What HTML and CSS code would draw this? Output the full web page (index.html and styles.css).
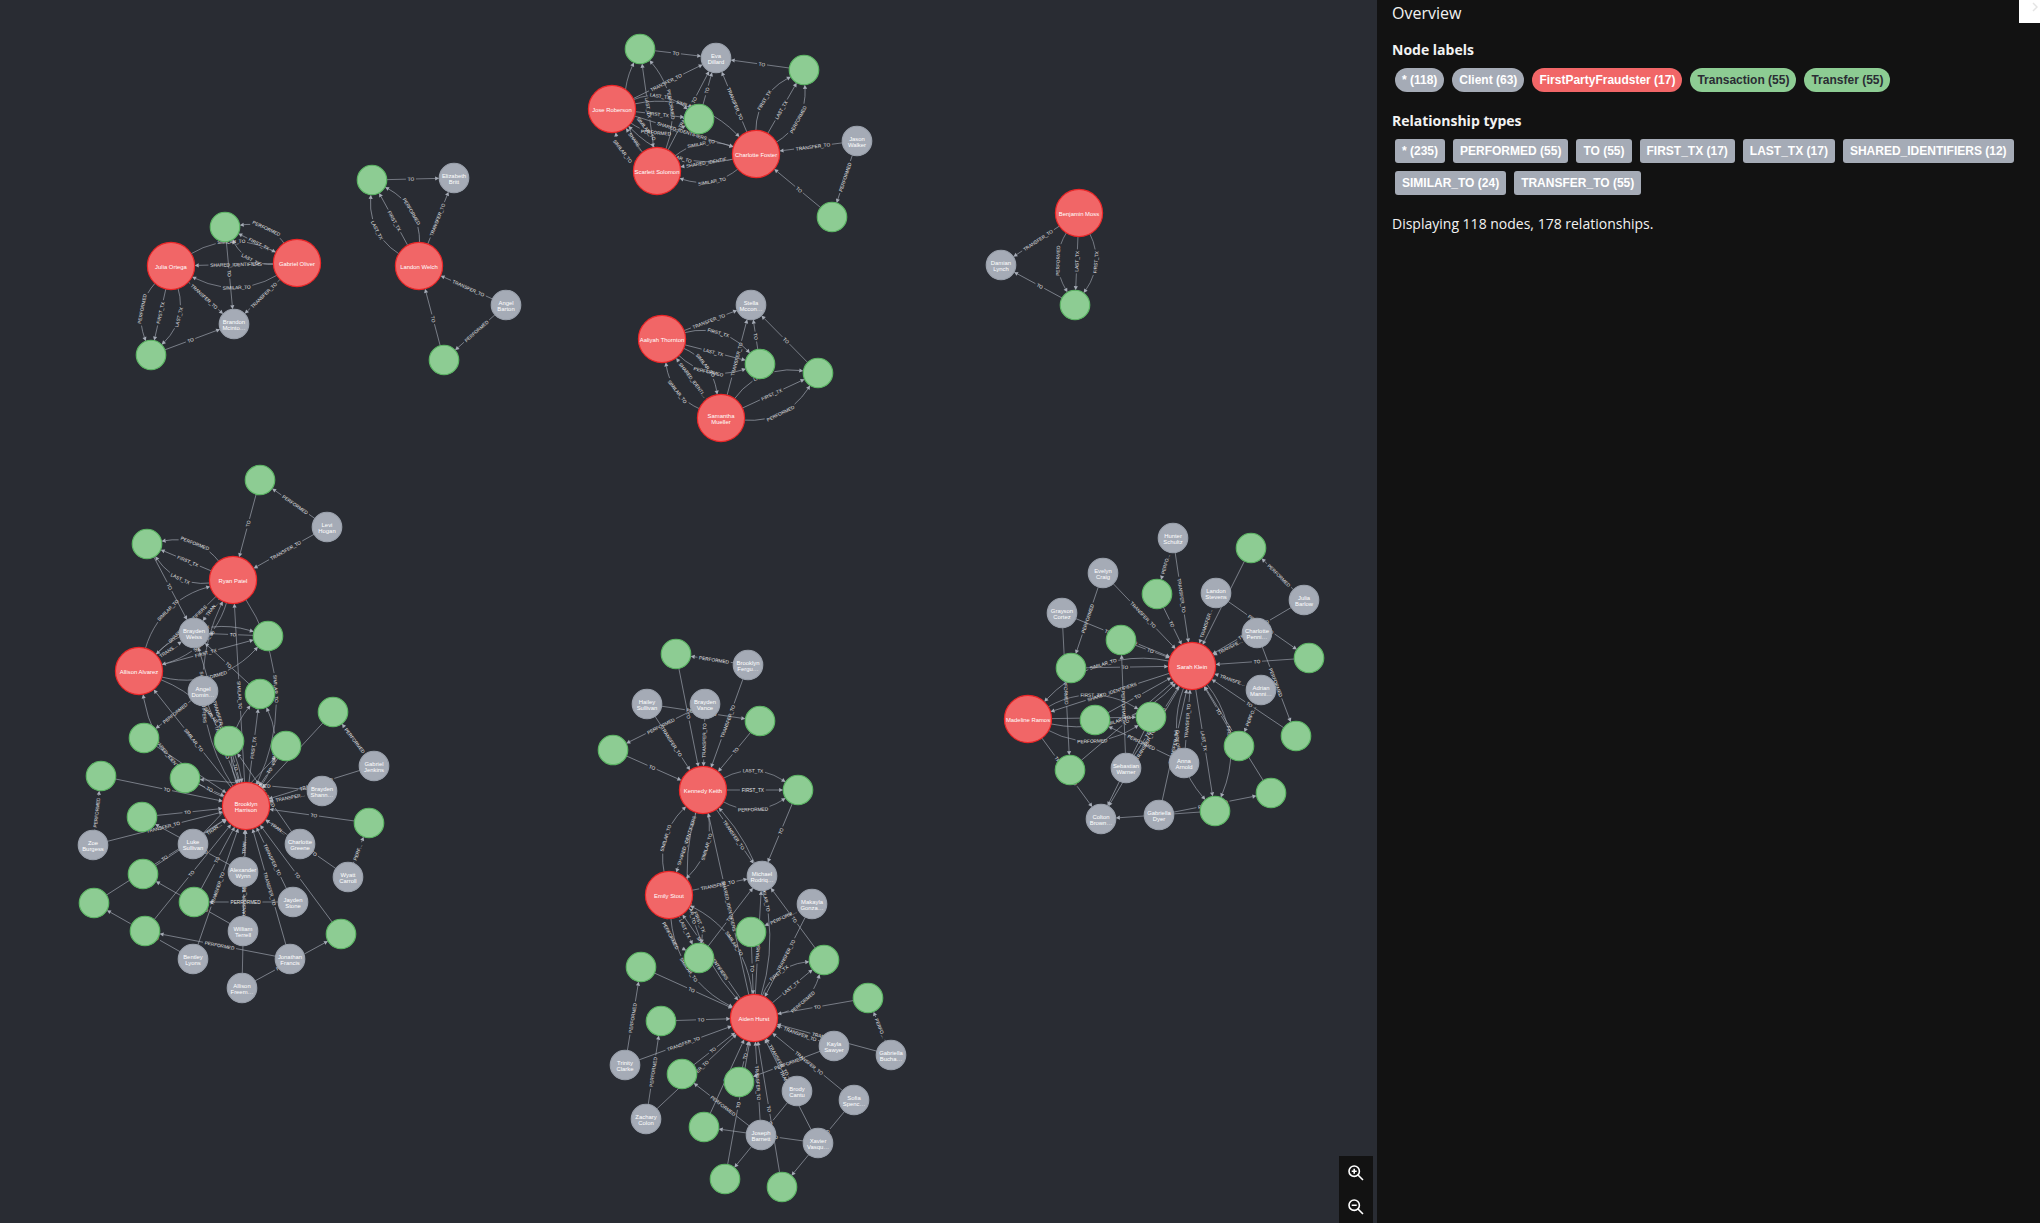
FILE: index.html
```html
<!DOCTYPE html>
<html lang="en">
<head>
<meta charset="utf-8">
<title>Graph overview</title>
<link rel="stylesheet" href="styles.css">
</head>
<body>
<div class="viewer">
  <main class="canvas">
    <svg class="graph" role="img" aria-label="Fraud graph">
      <g id="world">
        <g id="relationships"></g>
        <g id="nodes"></g>
      </g>
    </svg>
    <div class="zoom">
      <button class="zoom-button" type="button" aria-label="Zoom in">
        <svg viewBox="0 0 16 16" width="16" height="16"><circle cx="6.2" cy="6.2" r="5.2"/><path d="M10 10l5 5M6.2 3.7v5M3.7 6.2h5"/></svg>
      </button>
      <button class="zoom-button" type="button" aria-label="Zoom out">
        <svg viewBox="0 0 16 16" width="16" height="16"><circle cx="6.2" cy="6.2" r="5.2"/><path d="M10 10l5 5M3.7 6.2h5"/></svg>
      </button>
    </div>
  </main>
  <aside class="panel">
    <button class="collapse" type="button" aria-label="Collapse panel">
      <svg viewBox="0 0 6 10" width="6" height="10"><path d="M1 1l4 4-4 4"/></svg>
    </button>
    <h1 class="title">Overview</h1>
    <h2 class="heading">Node labels</h2>
    <ul class="chips">
      <li><button type="button" class="chip label">* (118)</button></li>
      <li><button type="button" class="chip label">Client (63)</button></li>
      <li><button type="button" class="chip label fraudster">FirstPartyFraudster (17)</button></li>
      <li><button type="button" class="chip label transaction">Transaction (55)</button></li>
      <li><button type="button" class="chip label transaction">Transfer (55)</button></li>
    </ul>
    <h2 class="heading">Relationship types</h2>
    <ul class="chips">
      <li><button type="button" class="chip">* (235)</button></li>
      <li><button type="button" class="chip">PERFORMED (55)</button></li>
      <li><button type="button" class="chip">TO (55)</button></li>
      <li><button type="button" class="chip">FIRST_TX (17)</button></li>
      <li><button type="button" class="chip">LAST_TX (17)</button></li>
      <li><button type="button" class="chip">SHARED_IDENTIFIERS (12)</button></li>
      <li><button type="button" class="chip">SIMILAR_TO (24)</button></li>
      <li><button type="button" class="chip">TRANSFER_TO (55)</button></li>
    </ul>
    <p class="summary">Displaying 118 nodes, 178 relationships.</p>
  </aside>
</div>
<script src="graph.js"></script>
</body>
</html>
```
FILE: styles.css
```css
* { box-sizing: border-box; }

body {
  margin: 0;
  background: #292c33;
  color: #f2f2f2;
  font-family: "Open Sans", "Noto Sans", sans-serif;
  font-size: 14px;
  line-height: 20px;
}

.viewer {
  display: flex;
  height: 100vh;
}

.canvas {
  position: relative;
  flex: 1;
  min-width: 0;
  overflow: hidden;
}

.graph {
  display: block;
  width: 100%;
  height: 100%;
  font-family: "Liberation Sans", Arial, sans-serif;
  text-anchor: middle;
}

.shaft { fill: none; stroke: #a5abb6; stroke-width: 1px; }
.head { fill: #a5abb6; }
.type { fill: #e6e6e8; font-size: 8px; }
.name { fill: #fff; font-size: 10px; }
.node { stroke-width: 2px; }
.node.c { fill: #a5abb6; stroke: #9aa1ac; }
.node.f { fill: #f16667; stroke: #eb2728; }
.node.t { fill: #8dcc93; stroke: #5db665; }

.zoom {
  position: absolute;
  right: 4px;
  bottom: -1px;
  display: flex;
  flex-direction: column;
  background: #121212;
}

.zoom-button {
  display: flex;
  align-items: center;
  justify-content: center;
  width: 34px;
  height: 34px;
  padding: 0;
  border: 0;
  background: none;
}

.zoom-button svg {
  fill: none;
  stroke: #fff;
  stroke-width: 1.6;
}

.panel {
  position: relative;
  flex: 0 0 32.5%;
  padding: 1px 16px 0 15px;
  background: #121212;
}

.collapse {
  position: absolute;
  top: 0;
  right: 0;
  display: flex;
  justify-content: flex-end;
  width: 21px;
  height: 23px;
  padding: 2px 2px 0 0;
  border: 0;
  background: #fff;
}

.collapse svg {
  fill: none;
  stroke: #e4e4e4;
  stroke-width: 1.5;
}

.title {
  margin: 0 0 15px;
  font-size: 16px;
  font-weight: 400;
  line-height: 24px;
}

.heading {
  margin: 0 0 8px;
  font-size: 14px;
  font-weight: 700;
}

.chips {
  display: flex;
  flex-wrap: wrap;
  gap: 8px;
  margin: 0 0 19px;
  padding: 0 0 0 3px;
  list-style: none;
}

.chips li { display: flex; }

.chip {
  height: 24px;
  padding: 0 7px;
  border: 0;
  border-radius: 3px;
  background: #a5abb6;
  color: #fff;
  font: bold 12px/24px "Liberation Sans", Arial, sans-serif;
  white-space: nowrap;
}

.chip.label { border-radius: 12px; }
.chip.fraudster { background: #f16667; }
.chip.transaction { background: #8dcc93; color: #2a2c34; }

.summary { margin: 0; }
```
FILE: graph.js
```js
const ZOOM = 0.59;
const RADIUS = { c: 25, t: 25, f: 40 };
const HEAD = 7;
const PADDING = 3;
const SVG = 'http://www.w3.org/2000/svg';

// id, kind (c client, f fraudster, t transaction), x, y, caption lines
const nodeRows = `
t1 t 225 227
julia f 171 266 Julia Ortega
gabriel f 297 263 Gabriel Oliver
t2 t 151 355
brandon c 234 324 Brandon|Mcinto…
t3 t 372 180
elizabeth c 454 178 Elizabeth|Britt
landon f 419 266 Landon Welch
angelb c 506 305 Angel|Barton
t4 t 444 360
t5 t 640 49
eva c 716 58 Eva|Dillard
t6 t 804 70
jose f 612 109 Jose Roberson
t7 t 699 119
scarlett f 657 171 Scarlett Solomon
charf f 756 154 Charlotte Foster
jason c 857 141 Jason|Walker
t8 t 832 217
stella c 751 305 Stella|Mccon…
aaliyah f 662 339 Aaliyah Thornton
t9 t 760 364
t10 t 818 373
samantha f 721 418 Samantha|Mueller
benjamin f 1079 213 Benjamin Moss
damian c 1001 265 Damian|Lynch
t11 t 1075 305
t12 t 260 480
levi c 327 527 Levi|Hogan
t13 t 147 544
ryan f 233 580 Ryan Patel
weiss c 194 633 Brayden|Weiss
t14 t 268 636
alvarez f 139 671 Allison Alvarez
angeld c 203 691 Angel|Domin…
t15 t 260 694
t16 t 333 712
t17 t 144 738
t18 t 229 741
t19 t 286 746
jenkins c 374 766 Gabriel|Jenkins
t20 t 185 778
t21 t 101 776
shann c 322 791 Brayden|Shann…
harrison f 246 806 Brooklyn|Harrison
t22 t 142 817
t23 t 369 823
zoe c 93 845 Zoe|Burgess
luke c 193 844 Luke|Sullivan
greene c 300 844 Charlotte|Greene
t24 t 143 874
alex c 243 872 Alexander|Wynn
wyatt c 348 877 Wyatt|Carroll
t25 t 194 902
jayden c 293 902 Jayden|Stone
t26 t 94 903
william c 243 931 William|Terrell
t27 t 145 931
t28 t 341 934
bentley c 193 959 Bentley|Lyons
jonathan c 290 959 Jonathan|Francis
freem c 242 988 Allison|Freem…
t29 t 676 654
fergu c 748 665 Brooklyn|Fergu…
hailey c 647 704 Hailey|Sullivan
vance c 705 704 Brayden|Vance
t30 t 760 721
t31 t 613 750
kennedy f 703 790 Kennedy Keith
t32 t 798 790
emily f 669 895 Emily Stout
michael c 762 876 Michael|Rodriq…
makayla c 812 904 Makayla|Gonza…
t33 t 751 932
t34 t 699 958
t35 t 641 967
t36 t 824 960
t37 t 868 998
t38 t 661 1021
aiden f 754 1018 Aiden Hurst
kayla c 834 1046 Kayla|Sawyer
bucha c 891 1055 Gabriella|Bucha…
trinity c 625 1065 Trinity|Clarke
t39 t 682 1074
t40 t 739 1082
brody c 797 1091 Brody|Cantu
sofia c 854 1100 Sofia|Spenc…
zachary c 646 1119 Zachary|Colon
t41 t 704 1127
joseph c 761 1135 Joseph|Barnett
xavier c 818 1143 Xavier|Vasqu…
t42 t 725 1179
t43 t 782 1187
hunter c 1173 538 Hunter|Schultz
t44 t 1251 548
evelyn c 1103 573 Evelyn|Craig
t45 t 1157 594
stevens c 1216 593 Landon|Stevens
barlow c 1304 600 Julia|Barlow
grayson c 1062 613 Grayson|Cortez
penni c 1257 633 Charlotte|Penni…
t46 t 1121 640
t47 t 1309 658
t48 t 1071 668
sarah f 1192 666 Sarah Klein
adrian c 1261 690 Adrian|Manni…
madeline f 1028 719 Madeline Ramos
t49 t 1095 720
t50 t 1151 717
t51 t 1296 736
t52 t 1239 746
t53 t 1070 770
anna c 1184 763 Anna|Arnold
sebastian c 1126 768 Sebastian|Warner
t54 t 1271 793
t55 t 1215 811
dyer c 1159 815 Gabriella|Dyer
colton c 1101 819 Colton|Brown…
`;

// Straight relationships, grouped by type, as source>target
const straight = {
  TO: `t1>brandon t2>brandon t3>elizabeth t4>landon t5>eva t6>eva t7>eva t8>charf
    t9>stella t10>stella t11>damian t12>ryan t13>weiss t14>weiss t15>weiss t16>harrison
    t17>harrison t18>harrison t19>harrison t20>harrison t21>harrison t22>harrison
    t23>harrison t24>harrison t25>harrison t26>harrison t27>harrison t28>harrison
    t29>kennedy t30>kennedy t31>kennedy t32>michael t33>aiden t34>michael t35>aiden
    t36>michael t37>aiden t38>aiden t39>aiden t40>aiden t41>aiden t42>aiden t43>aiden
    t44>sarah t45>sarah t46>sarah t47>sarah t48>sarah t49>sarah t50>colton t51>sarah
    t52>sarah t53>sarah t54>sarah t55>colton`,
  PERFORMED: `angelb>t4 jason>t8 levi>t12 angeld>t17 jenkins>t16 zoe>t21 shann>t20
    greene>t18 luke>t19 alex>t22 wyatt>t23 jayden>t25 william>t24 bentley>t26
    jonathan>t27 freem>t28 fergu>t29 hailey>t30 vance>t31 makayla>t33 trinity>t35
    zachary>t38 bucha>t37 kayla>t40 brody>t42 sofia>t43 joseph>t39 xavier>t41
    hunter>t45 barlow>t44 evelyn>t48 stevens>t47 grayson>t53 penni>t51 adrian>t52
    anna>t49 sebastian>t46 dyer>t54`,
  TRANSFER_TO: `julia>brandon gabriel>brandon landon>elizabeth angelb>landon jose>eva
    scarlett>eva charf>eva jason>charf aaliyah>stella samantha>stella benjamin>damian
    levi>ryan ryan>weiss alvarez>weiss harrison>weiss angeld>harrison jenkins>harrison
    zoe>harrison shann>harrison luke>harrison greene>harrison wyatt>harrison
    alex>harrison jayden>harrison william>harrison bentley>harrison jonathan>harrison
    freem>harrison fergu>kennedy hailey>kennedy vance>kennedy kennedy>michael
    emily>michael aiden>michael makayla>aiden trinity>aiden zachary>aiden bucha>aiden
    kayla>aiden brody>aiden sofia>aiden joseph>aiden xavier>aiden hunter>sarah
    barlow>sarah evelyn>sarah stevens>sarah grayson>sarah penni>sarah adrian>sarah
    anna>sarah sebastian>sarah dyer>sarah madeline>colton sarah>colton`,
  SHARED_IDENTIFIERS: `gabriel>julia jose>charf scarlett>jose charf>scarlett
    samantha>aaliyah ryan>alvarez kennedy>emily aiden>kennedy aiden>emily sarah>madeline`,
  SIMILAR_TO: `harrison>alvarez harrison>ryan`
};

// Fraudster to transaction fans: source, target, types from left to right
const fans = `
landon t3 LAST_TX FIRST_TX PERFORMED
julia t2 LAST_TX FIRST_TX PERFORMED
gabriel t1 LAST_TX FIRST_TX PERFORMED
scarlett t5 FIRST_TX LAST_TX PERFORMED
jose t7 LAST_TX FIRST_TX PERFORMED
charf t6 FIRST_TX LAST_TX PERFORMED
aaliyah t9 FIRST_TX LAST_TX PERFORMED
samantha t10 LAST_TX FIRST_TX PERFORMED
benjamin t11 FIRST_TX LAST_TX PERFORMED
ryan t13 LAST_TX FIRST_TX PERFORMED
alvarez t14 LAST_TX FIRST_TX PERFORMED
harrison t15 LAST_TX FIRST_TX PERFORMED
kennedy t32 LAST_TX FIRST_TX PERFORMED
emily t34 FIRST_TX LAST_TX PERFORMED
aiden t36 FIRST_TX LAST_TX PERFORMED
madeline t50 FIRST_TX LAST_TX PERFORMED
sarah t55 FIRST_TX LAST_TX PERFORMED
`;

// Curved relationships between fraudsters: source, target, type, side
const curved = `
julia gabriel SIMILAR_TO -1
gabriel julia SIMILAR_TO -1
jose charf SIMILAR_TO -1
charf jose SIMILAR_TO -1
jose scarlett SIMILAR_TO -1
scarlett jose SIMILAR_TO -1
scarlett charf SIMILAR_TO -1
charf scarlett SIMILAR_TO -1
aaliyah samantha SIMILAR_TO -1
samantha aaliyah SIMILAR_TO -1
alvarez ryan SIMILAR_TO -1
ryan alvarez SIMILAR_TO -1
alvarez harrison SIMILAR_TO -1
harrison alvarez SHARED_IDENTIFIERS -1
ryan harrison SIMILAR_TO -1
harrison ryan SHARED_IDENTIFIERS -1
emily kennedy SIMILAR_TO -1
kennedy emily SIMILAR_TO -1
kennedy aiden SIMILAR_TO 1
aiden kennedy SIMILAR_TO 1
emily aiden SIMILAR_TO 1
aiden emily SIMILAR_TO 1
sarah madeline SIMILAR_TO 1
madeline sarah SIMILAR_TO 1
`;

const lines = (text) => text.trim().split('\n');

function draw(parent, tag, attributes, text) {
  const element = document.createElementNS(SVG, tag);
  for (const key in attributes) element.setAttribute(key, attributes[key]);
  if (text) element.textContent = text;
  parent.append(element);
  return element;
}

const world = document.getElementById('world');
const relLayer = document.getElementById('relationships');
const nodeLayer = document.getElementById('nodes');
world.setAttribute('transform', `scale(${ZOOM})`);

const nodes = {};
for (const row of lines(nodeRows)) {
  const [id, kind, x, y, ...caption] = row.split(' ');
  nodes[id] = { kind, x: x / ZOOM, y: y / ZOOM, r: RADIUS[kind], caption: caption.join(' ') };
}

// Shortens a caption until it fits the shaft, then returns its drawn length
function fitCaption(text, room) {
  let length = text.getComputedTextLength();
  let full = text.textContent;
  while (length > room && full.length > 1) {
    full = full.slice(0, -1);
    text.textContent = full + '…';
    length = text.getComputedTextLength();
  }
  if (full.length < 2) {
    text.remove();
    return 0;
  }
  return length;
}

function relate(sourceId, targetId, type, side) {
  const a = nodes[sourceId];
  const b = nodes[targetId];
  const dx = b.x - a.x;
  const dy = b.y - a.y;
  const distance = Math.hypot(dx, dy);
  const angle = Math.atan2(dy, dx) * 180 / Math.PI;
  const group = draw(relLayer, 'g', { transform: `translate(${a.x} ${a.y}) rotate(${angle})` });
  const shaft = draw(group, 'path', { class: 'shaft' });
  const label = draw(group, 'text', { class: 'type' }, type);
  const flip = Math.abs(angle) > 90 ? 180 : 0;
  const endR = b.r + HEAD;

  if (!side) {
    const length = distance - a.r - endR;
    const caption = fitCaption(label, length - 2 * PADDING);
    const mid = a.r + length / 2;
    const gap = caption ? caption / 2 + PADDING : 0;
    shaft.setAttribute('d', `M${a.r} 0H${mid - gap}M${mid + gap} 0H${distance - endR}`);
    label.setAttribute('transform', `translate(${mid} 0) rotate(${flip}) translate(0 3)`);
    draw(group, 'path', { class: 'head', d: `M${distance - b.r} 0l${-HEAD} -3.5v7z` });
    return;
  }

  // The arc is part of a circle that leaves and enters both nodes at right angles
  const turn = side * Math.PI / 6;
  const start = { x: a.r * Math.cos(turn), y: a.r * Math.sin(turn) };
  const cx = (distance ** 2 + a.r ** 2 - endR ** 2) / (2 * distance);
  const signed = (start.x - cx) / Math.sin(turn);
  const cy = start.y + signed * Math.cos(turn);
  const radius = Math.abs(signed);
  const toCentre = Math.atan2(cy, cx - distance);
  const spread = Math.acos(endR / Math.hypot(cy, cx - distance));
  const ends = [toCentre + spread, toCentre - spread].map((t) => ({
    t, x: distance + endR * Math.cos(t), y: endR * Math.sin(t)
  }));
  const end = ends.sort((p, q) => p.x - q.x)[0];
  const from = Math.atan2(start.y - cy, start.x - cx);
  let sweep = Math.atan2(end.y - cy, end.x - cx) - from;
  if (sweep > Math.PI) sweep -= 2 * Math.PI;
  if (sweep < -Math.PI) sweep += 2 * Math.PI;
  const length = Math.abs(sweep) * radius;
  const caption = fitCaption(label, length - 2 * PADDING);
  const half = caption ? (caption / 2 + PADDING) / length : 0;
  const at = (f) => {
    const t = from + sweep * f;
    return `${cx + radius * Math.cos(t)} ${cy + radius * Math.sin(t)}`;
  };
  const arc = `A${radius} ${radius} 0 0 ${sweep > 0 ? 1 : 0} `;
  shaft.setAttribute('d', `M${at(0)}${arc}${at(0.5 - half)}M${at(0.5 + half)}${arc}${at(1)}`);
  const tangent = (from + sweep / 2) * 180 / Math.PI + (sweep > 0 ? 90 : -90);
  label.setAttribute('transform', `translate(${at(0.5)}) rotate(${tangent + flip}) translate(0 3)`);
  draw(group, 'path', {
    class: 'head',
    d: `M${HEAD} 0L0 -3.5V3.5z`,
    transform: `translate(${end.x} ${end.y}) rotate(${end.t * 180 / Math.PI + 180})`
  });
}

for (const type in straight) {
  for (const pair of straight[type].trim().split(/\s+/)) relate(...pair.split('>'), type, 0);
}
for (const row of lines(fans)) {
  const [source, target, ...types] = row.split(' ');
  types.forEach((type, i) => relate(source, target, type, i - 1));
}
for (const row of lines(curved)) {
  const [source, target, type, side] = row.split(' ');
  relate(source, target, type, Number(side));
}

for (const { kind, x, y, r, caption } of Object.values(nodes)) {
  draw(nodeLayer, 'circle', { class: `node ${kind}`, cx: x, cy: y, r });
  const words = caption ? caption.split('|') : [];
  words.forEach((word, i) => {
    draw(nodeLayer, 'text', { class: 'name', x, y: y + (i - words.length / 2) * 10 + 10 }, word);
  });
}
```
